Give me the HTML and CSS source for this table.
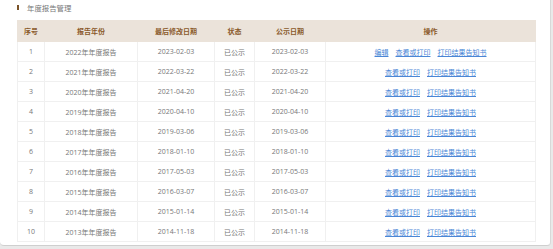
FILE: index.html
```html
<!DOCTYPE html>
<html lang="zh">
<head>
<meta charset="utf-8">
<title>年度报告管理</title>
<link rel="stylesheet" href="styles.css">
</head>
<body>
<div class="card">
  <div class="title"><span class="mark"></span><span class="title-text">年度报告管理</span></div>
  <table class="report-table">
    <colgroup>
      <col class="c1"><col class="c2"><col class="c3"><col class="c4"><col class="c5"><col class="c6">
    </colgroup>
    <thead>
      <tr><th>序号</th><th>报告年份</th><th>最后修改日期</th><th>状态</th><th>公示日期</th><th>操作</th></tr>
    </thead>
    <tbody>
      <tr><td>1</td><td>2022年年度报告</td><td>2023-02-03</td><td>已公示</td><td>2023-02-03</td><td class="ops"><a href="#">编辑</a><a href="#">查看或打印</a><a href="#">打印结果告知书</a></td></tr>
      <tr><td>2</td><td>2021年年度报告</td><td>2022-03-22</td><td>已公示</td><td>2022-03-22</td><td class="ops"><a href="#">查看或打印</a><a href="#">打印结果告知书</a></td></tr>
      <tr><td>3</td><td>2020年年度报告</td><td>2021-04-20</td><td>已公示</td><td>2021-04-20</td><td class="ops"><a href="#">查看或打印</a><a href="#">打印结果告知书</a></td></tr>
      <tr><td>4</td><td>2019年年度报告</td><td>2020-04-10</td><td>已公示</td><td>2020-04-10</td><td class="ops"><a href="#">查看或打印</a><a href="#">打印结果告知书</a></td></tr>
      <tr><td>5</td><td>2018年年度报告</td><td>2019-03-06</td><td>已公示</td><td>2019-03-06</td><td class="ops"><a href="#">查看或打印</a><a href="#">打印结果告知书</a></td></tr>
      <tr><td>6</td><td>2017年年度报告</td><td>2018-01-10</td><td>已公示</td><td>2018-01-10</td><td class="ops"><a href="#">查看或打印</a><a href="#">打印结果告知书</a></td></tr>
      <tr><td>7</td><td>2016年年度报告</td><td>2017-05-03</td><td>已公示</td><td>2017-05-03</td><td class="ops"><a href="#">查看或打印</a><a href="#">打印结果告知书</a></td></tr>
      <tr><td>8</td><td>2015年年度报告</td><td>2016-03-07</td><td>已公示</td><td>2016-03-07</td><td class="ops"><a href="#">查看或打印</a><a href="#">打印结果告知书</a></td></tr>
      <tr><td>9</td><td>2014年年度报告</td><td>2015-01-14</td><td>已公示</td><td>2015-01-14</td><td class="ops"><a href="#">查看或打印</a><a href="#">打印结果告知书</a></td></tr>
      <tr><td>10</td><td>2013年年度报告</td><td>2014-11-18</td><td>已公示</td><td>2014-11-18</td><td class="ops"><a href="#">查看或打印</a><a href="#">打印结果告知书</a></td></tr>
    </tbody>
  </table>
</div>
</body>
</html>
```
FILE: styles.css
```css
html, body {
  margin: 0;
  padding: 0;
  background: #e9e9e9;
  font-family: "Open Sans", "Noto Sans CJK SC", sans-serif;
}
.card {
  width: 551px;
  height: 246px;
  background: #fff;
  border-right: 1px solid #d8d8d8;
  border-bottom: 1px solid #cfcfcf;
  border-radius: 0 0 4px 4px;
  padding: 0 0 0 17px;
  box-sizing: border-box;
}
.title {
  height: 20px;
  display: flex;
  align-items: center;
  padding-bottom: 6px;
  box-sizing: border-box;
}
.mark {
  width: 2px;
  height: 5px;
  background: #7a5228;
  margin-right: 8px;
}
.title-text {
  font-size: 7.4px;
  color: #777;
}
.report-table {
  width: 518px;
  border-collapse: collapse;
  table-layout: fixed;
  font-size: 7px;
}
.c1 { width: 27px; }
.c2 { width: 93px; }
.c3 { width: 77px; }
.c4 { width: 40px; }
.c5 { width: 71px; }
.c6 { width: 210px; }
.report-table th {
  background: #ebe3da;
  color: #8a5a2a;
  font-weight: bold;
  height: 20px;
  padding: 0;
  border: 1px solid #ebe3da;
  border-left-color: #f4efea;
  text-align: center;
}
.report-table th:first-child { border-left-color: #ebe3da; }
.report-table td {
  height: 19px;
  padding: 0;
  border: 1px solid #f0f0f0;
  text-align: center;
  color: #777;
}
.ops a {
  color: #4a86d6;
  text-decoration: underline;
  margin: 0 3.5px;
}
```
